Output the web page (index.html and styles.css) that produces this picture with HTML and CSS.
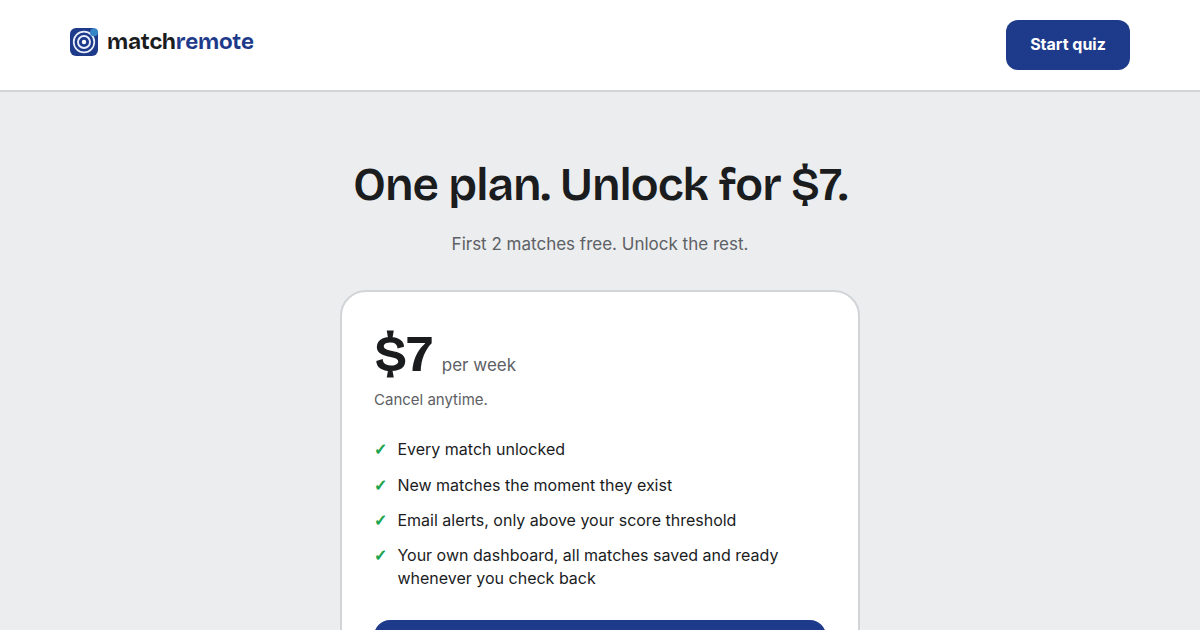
FILE: index.html
```html
<!DOCTYPE html>
<html lang="en">
<head>
  <meta charset="UTF-8">
  <meta name="viewport" content="width=device-width, initial-scale=1.0">
  <title>Pricing - matchremote</title>
  <link rel="stylesheet" href="styles.css">
</head>
<body>
  <header class="site-header">
    <div class="header-inner">
      <a href="#" class="brand">
        <svg class="brand-mark" viewBox="0 0 28 28" fill="none" aria-hidden="true">
          <rect width="28" height="28" rx="6" fill="#1e3a8a"/>
          <circle cx="14" cy="14" r="10.3" stroke="#e8eefb" stroke-width="1.7"/>
          <circle cx="14" cy="14" r="6" stroke="#e8eefb" stroke-width="1.9"/>
          <circle cx="14" cy="14" r="2.2" fill="#fff"/>
          <circle cx="24" cy="4.3" r="4" fill="#3585c6"/>
        </svg>
        <span class="brand-name">match<span class="brand-accent">remote</span></span>
      </a>
      <a href="#" class="btn btn-small">Start quiz</a>
    </div>
  </header>

  <main class="pricing">
    <h1>One plan. Unlock for $7.</h1>
    <p class="lead">First 2 matches free. Unlock the rest.</p>

    <section class="card">
      <div class="price-row">
        <span class="price">$7</span>
        <span class="period">per week</span>
      </div>
      <p class="note">Cancel anytime.</p>
      <ul class="features">
        <li>Every match unlocked</li>
        <li>New matches the moment they exist</li>
        <li>Email alerts, only above your score threshold</li>
        <li>Your own dashboard, all matches saved and ready whenever you check back</li>
      </ul>
      <a href="#" class="btn btn-block" aria-label="Start quiz"></a>
    </section>
  </main>
</body>
</html>
```

FILE: styles.css
```css
* {
  box-sizing: border-box;
  margin: 0;
  padding: 0;
}

body {
  font-family: Inter, "Liberation Sans", sans-serif;
  font-size: 16px;
  line-height: 1.45;
  color: #1a1c1e;
  background: #ebedef;
  height: 100vh;
  overflow: hidden;
}

a {
  text-decoration: none;
}

.site-header {
  background: #fff;
  border-bottom: 2px solid #d1d5d8;
}

.header-inner {
  max-width: 1100px;
  height: 90px;
  margin: 0 auto;
  padding: 0 20px;
  display: flex;
  align-items: center;
  justify-content: space-between;
}

.brand {
  display: flex;
  align-items: center;
  gap: 9px;
  color: #1a1c1e;
  padding-bottom: 6px;
}

.brand-mark {
  width: 28px;
  height: 28px;
}

.brand-name {
  font-family: "Bricolage Grotesque", Inter, sans-serif;
  font-size: 22.4px;
  font-weight: 700;
  letter-spacing: -0.01em;
  line-height: 28px;
}

.brand-accent {
  color: #1e3a8a;
}

.btn {
  display: block;
  background: #1e3a8a;
  color: #fff;
  font-weight: 700;
  text-align: center;
}

.btn-small {
  width: 124px;
  height: 50px;
  line-height: 49px;
  border-radius: 12px;
}

.pricing {
  width: 520px;
  margin: 0 auto;
  padding-top: 66px;
}

h1 {
  font-family: "Bricolage Grotesque", Inter, sans-serif;
  font-size: 46px;
  font-weight: 600;
  line-height: 54px;
  letter-spacing: -0.02em;
  text-align: center;
  white-space: nowrap;
}

.lead {
  margin-top: 19px;
  font-size: 17px;
  line-height: 26px;
  color: #5d6064;
  text-align: center;
}

.card {
  margin-top: 33px;
  height: 440px;
  padding: 32px;
  background: #fff;
  border: 2px solid #d1d5d8;
  border-radius: 26px;
}

.price-row {
  display: flex;
  align-items: baseline;
  gap: 10px;
  height: 61px;
}

.price {
  font-family: "Bricolage Grotesque", Inter, sans-serif;
  font-size: 52px;
  font-weight: 700;
  line-height: 61px;
  letter-spacing: -0.02em;
}

.period {
  font-size: 17px;
  color: #5d6064;
}

.note {
  margin-top: 4px;
  font-size: 15px;
  line-height: 22px;
  color: #5d6064;
}

.features {
  list-style: none;
  display: grid;
  gap: 12px;
  margin-top: 27.4px;
}

.features li {
  display: flex;
  gap: 10px;
}

.features li::before {
  content: "✓";
  flex: 0 0 13.4px;
  font-family: "DejaVu Sans", sans-serif;
  color: #16a34a;
  font-weight: 700;
  -webkit-text-stroke: 0.7px #16a34a;
}

.btn-block {
  margin-top: 29.6px;
  height: 56px;
  border-radius: 16px;
}
```
